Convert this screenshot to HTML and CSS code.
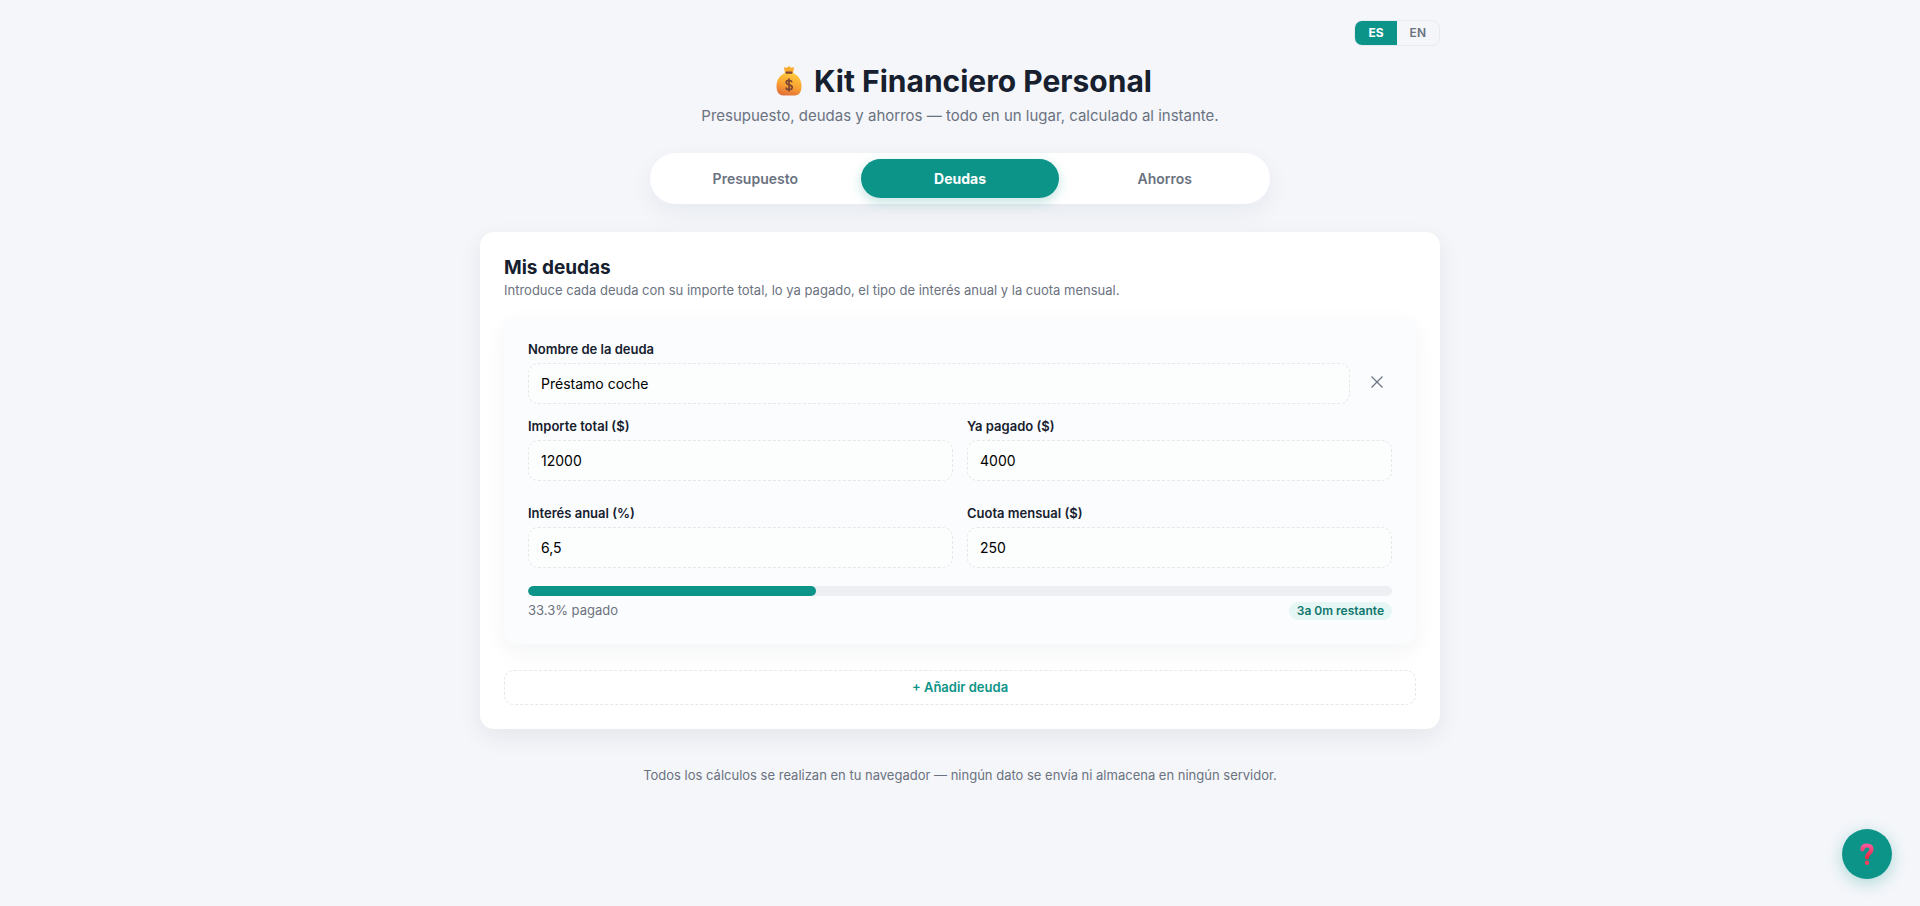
FILE: index.html
```html
<!DOCTYPE html>
<html lang="es">
<head>
    <meta charset="UTF-8">
    <meta name="viewport" content="width=device-width, initial-scale=1.0">
    <title>Kit Financiero Personal</title>
    <link rel="stylesheet" href="styles.css">
</head>
<body>
    <div class="app">
        <div class="lang-switch">
            <button type="button" class="lang active">ES</button>
            <button type="button" class="lang">EN</button>
        </div>

        <header>
            <h1>
                <svg class="bag" viewBox="0 0 26 30" aria-hidden="true">
                    <defs>
                        <linearGradient id="bagFill" x1="0.7" y1="0" x2="0.4" y2="1">
                            <stop offset="0" stop-color="#ffcb3d"/>
                            <stop offset="0.55" stop-color="#f9a332"/>
                            <stop offset="1" stop-color="#e2703a"/>
                        </linearGradient>
                    </defs>
                    <path d="M9 7 L8 2 Q8 1 9.500 1.500 Q11 2.200 12 .8 Q13 -.2 14 .8 Q15 2.200 16.500 1.500 Q18 1 18 2 L17 7 Z" fill="#fbab2e"/>
                    <path d="M9 7 C4 9 .5 14 .5 20 C.5 26 3 29.500 7 29.500 H19 C23 29.500 25.500 26 25.500 20 C25.500 14 22 9 17 7 Z" fill="url(#bagFill)"/>
                    <rect x="9.500" y="5.500" width="7" height="2.200" rx="1" fill="#7d4533"/>
                    <path d="M16 16.200 C15.600 14.800 14.600 14.300 13 14.300 C11.300 14.300 10.200 15.200 10.200 16.500 C10.200 19.600 16.200 18 16.200 21.300 C16.200 22.800 14.800 23.700 13 23.700 C11.300 23.700 10.200 22.900 9.900 21.500 M13 12.500 V25.500" fill="none" stroke="#7d4533" stroke-width="1.700"/>
                </svg>
                Kit Financiero Personal
            </h1>
            <p class="subtitle">Presupuesto, deudas y ahorros — todo en un lugar, calculado al instante.</p>
        </header>

        <nav class="tabs">
            <button type="button" class="tab">Presupuesto</button>
            <button type="button" class="tab active">Deudas</button>
            <button type="button" class="tab">Ahorros</button>
        </nav>

        <main class="card">
            <h2>Mis deudas</h2>
            <p class="hint">Introduce cada deuda con su importe total, lo ya pagado, el tipo de interés anual y la cuota mensual.</p>

            <div class="debt">
                <div class="debt-head">
                    <div class="field">
                        <label for="name">Nombre de la deuda</label>
                        <input type="text" id="name" value="Préstamo coche">
                    </div>
                    <button type="button" class="remove" aria-label="Eliminar">
                        <svg viewBox="0 0 12 12" width="12" height="12"><path d="M.5 .5 L11.500 11.500 M11.500 .5 L.5 11.500" stroke="currentColor" stroke-width="1.200"/></svg>
                    </button>
                </div>
                <div class="debt-grid">
                    <div class="field">
                        <label for="total">Importe total ($)</label>
                        <input type="text" inputmode="decimal" id="total" value="12000">
                    </div>
                    <div class="field">
                        <label for="paid">Ya pagado ($)</label>
                        <input type="text" inputmode="decimal" id="paid" value="4000">
                    </div>
                    <div class="field">
                        <label for="rate">Interés anual (%)</label>
                        <input type="text" inputmode="decimal" id="rate" value="6,5">
                    </div>
                    <div class="field">
                        <label for="fee">Cuota mensual ($)</label>
                        <input type="text" inputmode="decimal" id="fee" value="250">
                    </div>
                </div>
                <div class="progress">
                    <div class="progress-fill" style="width: 33.3%"></div>
                </div>
                <div class="debt-foot">
                    <span class="percent">33.3% pagado</span>
                    <span class="badge">3a 0m restante</span>
                </div>
            </div>

            <button type="button" class="add">+ Añadir deuda</button>
        </main>

        <footer>Todos los cálculos se realizan en tu navegador — ningún dato se envía ni almacena en ningún servidor.</footer>
    </div>

    <button type="button" class="help" aria-label="Ayuda">
        <svg viewBox="0 0 14 22" width="14" height="22">
            <defs>
                <linearGradient id="helpFill" x1="0" y1="0" x2="0" y2="1">
                    <stop offset="0" stop-color="#f8559a"/>
                    <stop offset="1" stop-color="#f0283f"/>
                </linearGradient>
            </defs>
            <path d="M2.500 6.300 C2.500 3.800 4.300 2.500 7 2.500 C9.800 2.500 11.500 4 11.500 6.500 C11.500 10.300 7 10.300 7 14.300" fill="none" stroke="url(#helpFill)" stroke-width="4.200" stroke-linecap="round"/>
            <circle cx="7" cy="19.700" r="2.200" fill="#f0405f"/>
        </svg>
    </button>
</body>
</html>
```
FILE: styles.css
```css
* {
    margin: 0;
    padding: 0;
    box-sizing: border-box;
}

body {
    background-color: #f4f6fa;
    color: #16202e;
    font-family: Inter, "Liberation Sans", sans-serif;
    min-height: 100vh;
}

button, input {
    font-family: inherit;
}

button {
    border: none;
    cursor: pointer;
}

.app {
    max-width: 992px;
    margin: 0 auto;
    padding: 20px 16px;
}

.lang-switch {
    display: flex;
    width: fit-content;
    margin-left: auto;
    border: 1px solid #e7eaef;
    border-radius: 8px;
    overflow: hidden;
}

.lang {
    background-color: transparent;
    color: #6b7280;
    font-size: 12px;
    font-weight: 600;
    line-height: 24px;
    padding: 0 13px;
}

.lang.active {
    background-color: #0d9488;
    color: #fff;
    font-weight: 700;
}

header {
    text-align: center;
    margin-top: 16px;
}

h1 {
    display: flex;
    justify-content: center;
    align-items: center;
    gap: 12px;
    font-size: 30px;
    font-weight: 700;
    line-height: 38px;
}

.bag {
    width: 26px;
    height: 30px;
    margin-left: 8px;
}

.subtitle {
    color: #6b7280;
    font-size: 15px;
    line-height: 24px;
    margin-top: 4px;
}

.tabs {
    display: flex;
    gap: 6px;
    max-width: 620px;
    margin: 25px auto 28px;
    padding: 6px;
    background-color: #fff;
    border-radius: 26px;
    box-shadow: 0 8px 24px rgba(22, 32, 46, 0.06);
}

.tab {
    flex: 1;
    background-color: transparent;
    border-radius: 20px;
    color: #6b7280;
    font-size: 14px;
    font-weight: 600;
    line-height: 39px;
}

.tab.active {
    background-color: #0d9488;
    color: #fff;
    font-weight: 700;
    box-shadow: 0 4px 12px rgba(13, 148, 136, 0.25);
}

.card {
    background-color: #fff;
    border-radius: 14px;
    padding: 24px;
    box-shadow: 0 8px 24px rgba(22, 32, 46, 0.07);
}

h2 {
    font-size: 19px;
    font-weight: 700;
    line-height: 24px;
}

.hint {
    color: #6b7280;
    font-size: 13px;
    line-height: 21px;
    margin-bottom: 16px;
}

.debt {
    background-color: #fbfcfd;
    border-radius: 14px;
    padding: 24px;
    margin-bottom: 26px;
    box-shadow: 0 8px 24px rgba(22, 32, 46, 0.05);
}

.debt-head {
    display: flex;
    align-items: flex-end;
    gap: 12px;
    margin-bottom: 14px;
}

.debt-head .field {
    flex: 1;
}

.debt-grid {
    display: grid;
    grid-template-columns: 1fr 1fr;
    gap: 24px 14px;
}

.field {
    display: flex;
    flex-flow: column;
    gap: 6px;
}

label {
    font-size: 13px;
    font-weight: 600;
    line-height: 16px;
}

input {
    width: 100%;
    height: 41px;
    padding: 0 12px;
    background-color: #fcfdfd;
    border: 1px dashed #e5e7eb;
    border-radius: 10px;
    color: #000;
    font-size: 14px;
}

.remove {
    display: flex;
    justify-content: center;
    align-items: center;
    width: 30px;
    height: 44px;
    background-color: transparent;
    color: #6b7280;
}

.progress {
    height: 10px;
    margin-top: 18px;
    background-color: #eeeff2;
    border-radius: 5px;
    overflow: hidden;
}

.progress-fill {
    height: 100%;
    background-color: #0d9488;
    border-radius: 5px;
}

.debt-foot {
    display: flex;
    justify-content: space-between;
    align-items: flex-start;
    margin-top: 6px;
}

.percent {
    color: #6b7280;
    font-size: 13px;
    line-height: 16px;
}

.badge {
    background-color: #e6f6f4;
    border-radius: 9px;
    color: #0f766e;
    font-size: 12px;
    font-weight: 600;
    line-height: 18px;
    padding: 0 8px;
}

.add {
    display: block;
    width: 100%;
    background-color: #fff;
    border: 1px dashed #e5e7eb;
    border-radius: 10px;
    color: #0d9488;
    font-size: 13px;
    font-weight: 600;
    line-height: 33px;
}

footer {
    color: #6b7280;
    font-size: 13px;
    line-height: 20px;
    margin-top: 36px;
    text-align: center;
}

.help {
    position: fixed;
    right: 28px;
    bottom: 27px;
    display: flex;
    justify-content: center;
    align-items: center;
    width: 50px;
    height: 50px;
    background-color: #0d9488;
    border-radius: 50%;
    box-shadow: 0 4px 16px rgba(13, 148, 136, 0.3);
}
```
